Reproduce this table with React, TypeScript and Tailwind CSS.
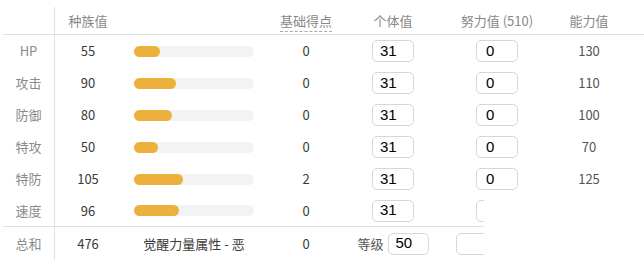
const stats = [
  { name: 'HP', base: 55, ev: 0, iv: 31, effort: 0, total: 130 },
  { name: '攻击', base: 90, ev: 0, iv: 31, effort: 0, total: 110 },
  { name: '防御', base: 80, ev: 0, iv: 31, effort: 0, total: 100 },
  { name: '特攻', base: 50, ev: 0, iv: 31, effort: 0, total: 70 },
  { name: '特防', base: 105, ev: 2, iv: 31, effort: 0, total: 125 },
  { name: '速度', base: 96, ev: 0, iv: 31, effort: 0, total: null },
];

const cols = 'grid grid-cols-[52px_66px_146px_78px_96px_112px_72px] items-center';

function NumInput({ value, className = '' }: { value: string; className?: string }) {
  return (
    <input
      type="text"
      defaultValue={value}
      className={`h-[22px] rounded-[5px] border border-[#d6d6d6] bg-white pl-[7px] text-[15px] text-black outline-none [font-family:'Liberation_Sans',Arial,sans-serif] ${className}`}
    />
  );
}

export default function App() {
  return (
    <div className="relative h-[266px] w-[644px] overflow-hidden bg-white text-[13px] text-[#3a3a3a] [font-family:'Noto_Sans_CJK_SC',sans-serif]">
      <div className="pl-[3px] pt-[7px]">
        {/* 表头 */}
        <div className={`${cols} h-[28px] border-b border-[#e0e0e0] text-[#888]`}>
          <div className="h-full border-r border-[#e0e0e0]"></div>
          <div className="text-center">种族值</div>
          <div></div>
          <div className="text-center">
            <span className="border-b border-dashed border-[#aaa] pb-[1px]">基础得点</span>
          </div>
          <div className="text-center">个体值</div>
          <div className="text-center">努力值 (510)</div>
          <div className="text-center">能力值</div>
        </div>

        {stats.map((s, i) => (
          <div
            key={s.name}
            className={`${cols} h-8 ${i === stats.length - 1 ? 'border-b border-[#e0e0e0]' : ''}`}
          >
            <div className="flex h-full items-center justify-center border-r border-[#e0e0e0] text-[#8a8a8a]">
              {s.name}
            </div>
            <div className="text-center">{s.base}</div>
            <div className="pl-[13px]">
              <div className="h-[11px] w-[120px] rounded-full bg-[#f3f3f3]">
                <div
                  className="h-full rounded-full bg-[#ebb13c]"
                  style={{ width: `${(s.base / 255) * 120}px` }}
                ></div>
              </div>
            </div>
            <div className="text-center">{s.ev}</div>
            <div className="flex justify-center">
              <NumInput value={String(s.iv)} className="w-[42px]" />
            </div>
            <div className="flex justify-center">
              <NumInput value={String(s.effort)} className="w-[42px] pl-[9px]" />
            </div>
            <div className="text-center text-[#555]">{s.total ?? ''}</div>
          </div>
        ))}

        {/* 总和 */}
        <div className={`${cols} h-[33px]`}>
          <div className="flex h-full items-center justify-center border-r border-[#e0e0e0] text-[#8a8a8a]">
            总和
          </div>
          <div className="text-center">476</div>
          <div className="text-center">觉醒力量属性 - 恶</div>
          <div className="text-center">0</div>
          <div className="flex items-center justify-center gap-[4px]">
            <span className="text-[#555]">等级</span>
            <NumInput value="50" className="w-[41px]" />
          </div>
          <div className="pl-[15px]">
            <NumInput value="" className="w-[80px]" />
          </div>
          <div></div>
        </div>
      </div>

      {/* 右下角遮挡层 */}
      <div className="absolute bottom-0 left-[484px] right-0 top-[197px] bg-white"></div>
    </div>
  );
}
